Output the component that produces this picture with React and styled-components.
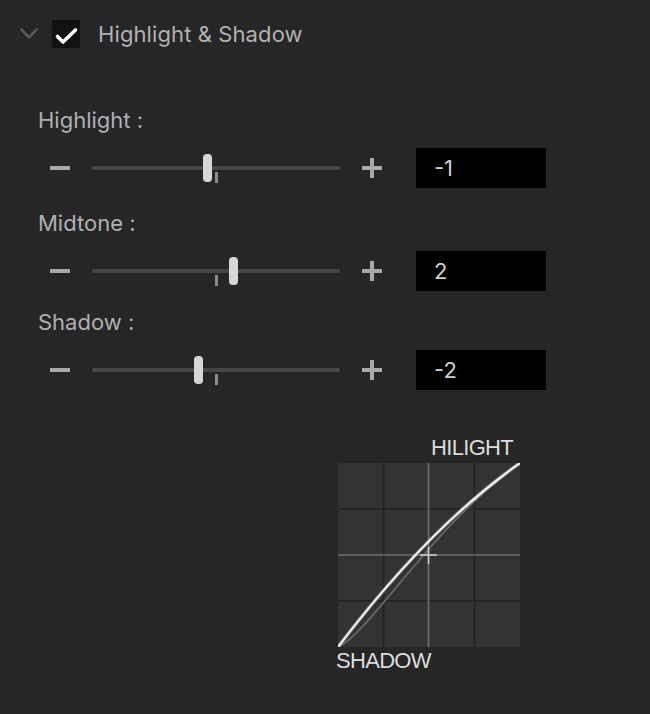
import React from 'react';
import styled, { createGlobalStyle } from 'styled-components';

const Global = createGlobalStyle`
  html, body { margin: 0; padding: 0; background: #262626; }
  body { width: 650px; height: 714px; overflow: hidden; font-family: Inter, "Liberation Sans", sans-serif; }
`;

const Panel = styled.div`
  width: 650px;
  height: 714px;
  box-sizing: border-box;
  background: #262626;
  padding: 20px 0 0 20px;
  display: flex;
  flex-direction: column;
`;

const Header = styled.div`
  display: flex;
  align-items: center;
  height: 28px;
`;

const Chevron = styled.svg`
  width: 18px;
  height: 12px;
  margin-right: 14px;
  display: block;
`;

const CheckBox = styled.div`
  width: 28px;
  height: 28px;
  background: #111111;
  border-radius: 2px;
  display: flex;
  align-items: center;
  justify-content: center;
  margin-right: 18px;
`;

const Title = styled.div`
  font-size: 22px;
  line-height: 28px;
  color: #b2b2b2;
  letter-spacing: 0.1px;
`;

const Body = styled.div`
  display: flex;
  flex-direction: column;
  padding-left: 18px;
`;

const Section = styled.div`
  display: flex;
  flex-direction: column;
  margin-top: ${(p) => p.$top}px;
`;

const Label = styled.div`
  font-size: 22px;
  line-height: 24px;
  color: #b0b0b0;
`;

const SliderRow = styled.div`
  display: flex;
  align-items: center;
  height: 40px;
  margin-top: 16px;
`;

const StepButton = styled.div`
  position: relative;
  width: 20px;
  height: 20px;
  flex: none;
  margin: ${(p) => p.$margin};
  &::before {
    content: '';
    position: absolute;
    left: 0;
    top: 8px;
    width: 20px;
    height: 4px;
    background: #a9a9a9;
  }
  ${(p) =>
    p.$plus &&
    `&::after {
      content: '';
      position: absolute;
      left: 8px;
      top: 0;
      width: 4px;
      height: 20px;
      background: #a9a9a9;
    }`}
`;

const Track = styled.div`
  position: relative;
  width: 248px;
  height: 4px;
  background: #464646;
  border-radius: 2px;
  flex: none;
`;

const Thumb = styled.div`
  position: absolute;
  top: -12px;
  width: 9px;
  height: 28px;
  margin-left: -4.5px;
  border-radius: 4px;
  background: #d6d6d6;
`;

const Tick = styled.div`
  position: absolute;
  left: 122.5px;
  top: 6px;
  width: 3px;
  height: 11px;
  background: #8c8c8c;
`;

const ValueBox = styled.div`
  width: 130px;
  height: 40px;
  box-sizing: border-box;
  background: #000000;
  color: #cfcfcf;
  font-size: 22px;
  line-height: 40px;
  padding-left: 18px;
  margin-left: 34px;
  flex: none;
`;

const GraphBlock = styled.div`
  display: flex;
  flex-direction: column;
  width: 184px;
  margin-left: 298px;
  margin-top: 48px;
`;

const AxisText = styled.div`
  font-family: "Liberation Sans", Arial, sans-serif;
  font-size: 22px;
  line-height: 20px;
  letter-spacing: -0.7px;
  color: #dcdcdc;
  text-align: ${(p) => p.$align};
  padding-right: ${(p) => (p.$align === 'right' ? '7px' : '0')};
  margin-top: ${(p) => p.$mt || 0}px;
`;

const GraphSvg = styled.svg`
  display: block;
  width: 182px;
  height: 184px;
  margin-left: 2px;
  margin-top: 5px;
`;

function Slider({ value }) {
  const pos = 124 + value * 8.6;
  return (
    <SliderRow>
      <StepButton $margin="0 22px 0 12px" />
      <Track>
        <Tick />
        <Thumb style={{ left: `${pos}px` }} />
      </Track>
      <StepButton $plus $margin="0 0 0 22px" />
      <ValueBox>{value}</ValueBox>
    </SliderRow>
  );
}

function Graph() {
  const cells = [45.5, 136.5];
  const rows = [46, 138];
  return (
    <GraphSvg viewBox="0 0 182 184">
      <rect x="0" y="0" width="182" height="184" fill="#333333" />
      {cells.map((x) => (
        <line key={'v' + x} x1={x} y1="0" x2={x} y2="184" stroke="#252525" strokeWidth="2" />
      ))}
      {rows.map((y) => (
        <line key={'h' + y} x1="0" y1={y} x2="182" y2={y} stroke="#252525" strokeWidth="2" />
      ))}
      <line x1="90.5" y1="0" x2="90.5" y2="184" stroke="#6e6e6e" strokeWidth="1.6" />
      <line x1="0" y1="92" x2="182" y2="92" stroke="#6e6e6e" strokeWidth="1.6" />
      <path d="M0,184 C30,172 95,62 182,0" fill="none" stroke="#646464" strokeWidth="2" />
      <line x1="82" y1="92" x2="99" y2="92" stroke="#c8c8c8" strokeWidth="1.6" />
      <line x1="90.5" y1="84" x2="90.5" y2="101" stroke="#c8c8c8" strokeWidth="1.6" />
      <path d="M0,184 Q91,64 182,0" fill="none" stroke="rgba(255,255,255,0.18)" strokeWidth="4.2" />
      <path d="M0,184 Q91,64 182,0" fill="none" stroke="#ededed" strokeWidth="2.3" />
    </GraphSvg>
  );
}

export default function App() {
  return (
    <>
      <Global />
      <Panel>
        <Header>
          <Chevron viewBox="0 0 18 12">
            <path d="M1.5 1.5 L9 9.5 L16.5 1.5" fill="none" stroke="#575757" strokeWidth="2.6" strokeLinecap="round" strokeLinejoin="round" />
          </Chevron>
          <CheckBox>
            <svg width="28" height="28" viewBox="0 0 28 28">
              <path d="M5.5 16.5 L11 22 L23.5 10" fill="none" stroke="#ffffff" strokeWidth="3.6" strokeLinecap="round" strokeLinejoin="round" />
            </svg>
          </CheckBox>
          <Title>Highlight &amp; Shadow</Title>
        </Header>
        <Body>
          <Section $top={60}>
            <Label>Highlight :</Label>
            <Slider value={-1} />
          </Section>
          <Section $top={23}>
            <Label>Midtone :</Label>
            <Slider value={2} />
          </Section>
          <Section $top={19}>
            <Label>Shadow :</Label>
            <Slider value={-2} />
          </Section>
          <GraphBlock>
            <AxisText $align="right">HILIGHT</AxisText>
            <Graph />
            <AxisText $align="left" $mt={4}>SHADOW</AxisText>
          </GraphBlock>
        </Body>
      </Panel>
    </>
  );
}
